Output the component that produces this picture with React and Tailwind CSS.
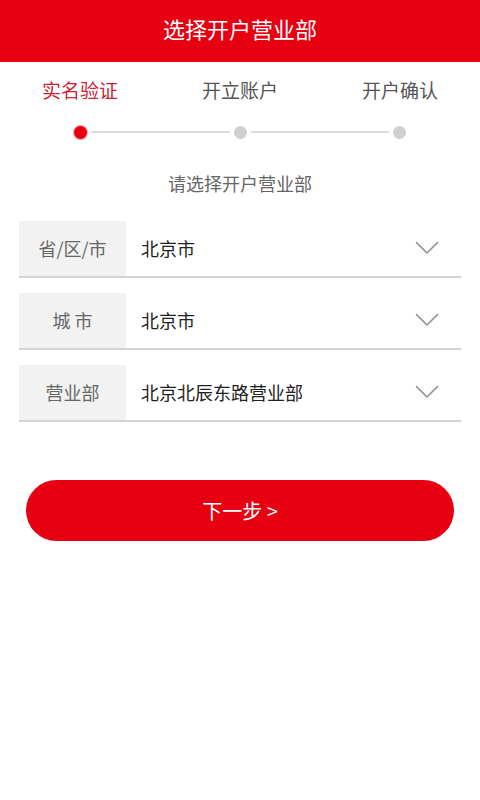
const font = { fontFamily: '"Noto Sans CJK SC", "Noto Sans", sans-serif' };

function Chevron() {
  return (
    <svg width="24" height="14" viewBox="0 0 24 14" fill="none" className="text-[#8e8e8e]">
      <path d="M1.5 1.5 L12 12 L22.5 1.5" stroke="currentColor" strokeWidth="1.6" strokeLinecap="round" strokeLinejoin="round" />
    </svg>
  );
}

function SelectRow({ label, value }) {
  return (
    <div className="flex h-[57px] border-b-2 border-[#d4d4d4]">
      <div className="w-[107px] h-[55px] bg-[#f2f2f2] flex items-center justify-center text-[18px] text-[#666]">{label}</div>
      <div className="flex-1 flex items-center pl-[15px] text-[18px] text-[#222]">{value}</div>
      <div className="flex items-center pr-[22px] pb-[2px]"><Chevron /></div>
    </div>
  );
}

export default function App() {
  const steps = ["实名验证", "开立账户", "开户确认"];
  return (
    <div className="w-[480px] h-[800px] bg-white" style={font}>
      <div className="h-[62px] bg-[#e60012] flex items-center justify-center pb-[5px] text-white text-[22px]">选择开户营业部</div>

      <div className="grid grid-cols-3 pt-[14px] h-[56px]">
        {steps.map((s, i) => (
          <div key={s} className={"text-center text-[19px] leading-[28px] " + (i === 0 ? "text-[#cc2233]" : "text-[#555]")}>{s}</div>
        ))}
      </div>

      <div className="flex items-center px-[74px] h-[28px]">
        <div className="w-[13px] h-[13px] rounded-full bg-[#e60012] ring-1 ring-[#f5a0a0]" />
        <div className="flex-1 h-[2px] bg-[#dcdcdc] mx-[4px]" />
        <div className="w-[13px] h-[13px] rounded-full bg-[#cfcfcf]" />
        <div className="flex-1 h-[2px] bg-[#dcdcdc] mx-[4px]" />
        <div className="w-[13px] h-[13px] rounded-full bg-[#cfcfcf]" />
      </div>

      <div className="text-center text-[18px] text-[#666] pt-[24px] h-[75px]">请选择开户营业部</div>

      <div className="mx-[19px] flex flex-col gap-[15px]">
        <SelectRow label="省/区/市" value="北京市" />
        <SelectRow label="城 市" value="北京市" />
        <SelectRow label="营业部" value="北京北辰东路营业部" />
      </div>

      <div className="px-[26px] pt-[58px]">
        <button className="w-full h-[61px] rounded-full bg-[#e60012] text-white text-[20px] flex items-center justify-center">下一步 &gt;</button>
      </div>
    </div>
  );
}
